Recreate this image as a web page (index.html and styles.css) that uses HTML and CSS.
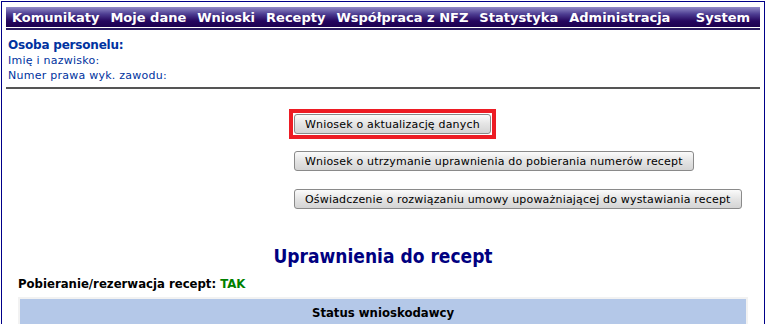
FILE: index.html
```html
<!DOCTYPE html>
<html lang="pl">
<head>
    <meta charset="UTF-8">
    <title>Uprawnienia do recept</title>
    <link rel="stylesheet" href="styles.css">
</head>
<body>
    <div class="page">
        <nav class="menu">
            <a href="#">Komunikaty</a>
            <a href="#">Moje dane</a>
            <a href="#">Wnioski</a>
            <a href="#">Recepty</a>
            <a href="#">Współpraca z NFZ</a>
            <a href="#">Statystyka</a>
            <a href="#">Administracja</a>
            <a href="#" class="menu-right">System</a>
        </nav>

        <div class="person">
            <div class="person-title">Osoba personelu:</div>
            <div>Imię i nazwisko:</div>
            <div>Numer prawa wyk. zawodu:</div>
        </div>

        <div class="actions">
            <span class="marked">
                <button class="btn">Wniosek o aktualizację danych</button>
            </span>
            <button class="btn">Wniosek o utrzymanie uprawnienia do pobierania numerów recept</button>
            <button class="btn">Oświadczenie o rozwiązaniu umowy upoważniającej do wystawiania recept</button>
        </div>

        <h2 class="section-title">Uprawnienia do recept</h2>
        <p class="status-line">Pobieranie/rezerwacja recept: <span class="yes">TAK</span></p>

        <table class="grid">
            <tr>
                <th>Status wnioskodawcy</th>
            </tr>
        </table>
    </div>
</body>
</html>
```

FILE: styles.css
```css
body {
    margin: 1px;
    font-family: "DejaVu Sans", Verdana, sans-serif;
    background-color: white;
}

.page {
    border: 1px solid #000088;
    border-bottom: none;
    padding: 5px 4px 0 4px;
    height: 330px;
}

.menu {
    display: flex;
    gap: 11px;
    padding: 0 10px 0 6px;
    height: 20px;
    align-items: center;
    background: linear-gradient(#928cc8 0%, #4e3e92 35%, #25065e 70%, #1c0050 100%);
    border-bottom: 1px solid white;
    box-shadow: 0 2px 0 #2a1a60;
}

.menu a {
    color: white;
    font-weight: bold;
    font-size: 13px;
    text-decoration: none;
    white-space: nowrap;
}

.menu .menu-right {
    margin-left: auto;
}

.person {
    color: #0033a0;
    font-size: 11px;
    letter-spacing: 0.25px;
    line-height: 15px;
    padding: 9px 2px 4px 2px;
    border-bottom: 2px solid #555555;
}

.person-title {
    font-weight: bold;
    font-size: 12px;
    letter-spacing: -0.2px;
    line-height: 16px;
}

.actions {
    display: flex;
    flex-direction: column;
    align-items: flex-start;
    gap: 18px;
    padding: 20px 0 0 283px;
}

.marked {
    display: block;
    border: 4px solid #ed1c24;
    padding: 1px;
    margin-bottom: -6px;
}

.actions > .btn {
    margin-left: 5px;
}

.btn {
    display: block;
    font-family: "DejaVu Sans", Verdana, sans-serif;
    font-size: 11px;
    letter-spacing: 0.18px;
    color: black;
    height: 20px;
    padding: 0 10px;
    border: 1px solid #8a8a8a;
    border-radius: 3px;
    background: linear-gradient(#fbfbfb, #e4e4e4 50%, #d4d4d4);
}

.section-title {
    font-family: "DejaVu Sans Condensed", "DejaVu Sans", sans-serif;
    font-weight: bold;
    font-size: 19px;
    color: #000080;
    text-align: center;
    margin: 36px 0 0 0;
}

.status-line {
    font-family: "DejaVu Sans Condensed", "DejaVu Sans", sans-serif;
    font-weight: bold;
    font-size: 13px;
    margin: 9px 0 0 12px;
}

.yes {
    color: #008000;
}

.grid {
    width: 730px;
    margin: 6px auto 0 auto;
    border-spacing: 2px;
    background-color: #f2f2f2;
}

.grid th {
    font-family: "DejaVu Sans Condensed", "DejaVu Sans", sans-serif;
    font-size: 13px;
    background-color: #b4c8e8;
    height: 26px;
    padding: 0;
}
```
